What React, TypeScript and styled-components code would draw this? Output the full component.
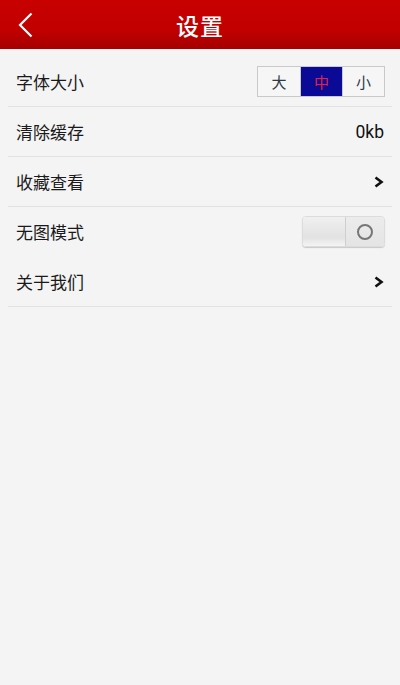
import React, { useState } from "react";
import styled, { createGlobalStyle } from "styled-components";

const GlobalStyle = createGlobalStyle`
  html, body {
    margin: 0;
    padding: 0;
    background: #f4f4f4;
  }
  body {
    font-family: "Noto Sans CJK SC", "Noto Sans", sans-serif;
  }
`;

const Page = styled.div`
  width: 400px;
  min-height: 685px;
  background: #f4f4f4;
  display: flex;
  flex-direction: column;
`;

const Header = styled.header`
  height: 49px;
  background: linear-gradient(to bottom, #c80000 0%, #c20000 60%, #a40000 100%);
  display: grid;
  grid-template-columns: 50px 1fr 50px;
  align-items: center;
`;

const BackButton = styled.button`
  border: 0;
  background: none;
  padding: 0 0 0 17px;
  height: 49px;
  display: flex;
  align-items: center;
  cursor: pointer;
`;

const Title = styled.h1`
  margin: 0;
  text-align: center;
  color: #fff;
  font-size: 23px;
  font-weight: 500;
  letter-spacing: 1px;
`;

const List = styled.div`
  padding: 8px 8px 0;
`;

const Row = styled.div<{ $divider?: boolean }>`
  height: 49px;
  display: flex;
  align-items: center;
  justify-content: space-between;
  padding: 0 8px;
  border-bottom: 1px solid ${({ $divider = true }) => ($divider ? "#e2e2e2" : "transparent")};
`;

const Label = styled.span`
  font-size: 17px;
  color: #1a1a1a;
`;

const Value = styled.span`
  font-family: "Roboto", "Noto Sans", sans-serif;
  font-size: 17.5px;
  color: #111;
`;

const Segmented = styled.div`
  display: flex;
  border: 1px solid #c9c9c9;
  height: 29px;
  margin-right: -1px;
`;

const Segment = styled.button<{ $active?: boolean }>`
  width: 42px;
  border: 0;
  border-left: 1px solid #c9c9c9;
  padding: 0;
  font-family: "Noto Sans CJK SC", sans-serif;
  font-size: 15px;
  background: ${({ $active }) => ($active ? "#0a0a96" : "#f6f6f6")};
  color: ${({ $active }) => ($active ? "#e8203c" : "#2e3a4a")};
  cursor: pointer;
  &:first-child {
    border-left: 0;
  }
`;

const Toggle = styled.div`
  display: flex;
  width: 83px;
  height: 31px;
  border-radius: 4px;
  overflow: hidden;
  margin-right: -1px;
  box-shadow: 0 1px 1px rgba(0, 0, 0, 0.18);
  border: 1px solid #dcdcdc;
  box-sizing: border-box;
`;

const ToggleTrack = styled.div`
  flex: 1;
  background: linear-gradient(to bottom, #f0f0f0 0%, #e2e2e2 70%, #f4f4f4 100%);
`;

const ToggleKnob = styled.div`
  width: 38px;
  border-left: 1px solid #cfcfcf;
  background: linear-gradient(to bottom, #ececec, #e4e4e4);
  display: flex;
  align-items: center;
  justify-content: center;
`;

const KnobRing = styled.span`
  width: 12px;
  height: 12px;
  border-radius: 50%;
  border: 2px solid #767676;
`;

const Chevron = () => (
  <svg width="10" height="12" viewBox="0 0 10 12">
    <path d="M1.5 1.5 L7.5 6 L1.5 10.5" fill="none" stroke="#111" strokeWidth="2.6" strokeLinejoin="miter" />
  </svg>
);

const sizes = ["大", "中", "小"];

export default function App() {
  const [size, setSize] = useState("中");
  return (
    <Page>
      <GlobalStyle />
      <Header>
        <BackButton aria-label="返回">
          <svg width="17" height="26" viewBox="0 0 17 26">
            <path d="M14.5 1.5 L3 13 L14.5 24.5" fill="none" stroke="#fff" strokeWidth="2.2" />
          </svg>
        </BackButton>
        <Title>设置</Title>
        <span />
      </Header>
      <List>
        <Row>
          <Label>字体大小</Label>
          <Segmented>
            {sizes.map((s) => (
              <Segment key={s} $active={s === size} onClick={() => setSize(s)}>
                {s}
              </Segment>
            ))}
          </Segmented>
        </Row>
        <Row>
          <Label>清除缓存</Label>
          <Value>0kb</Value>
        </Row>
        <Row>
          <Label>收藏查看</Label>
          <Chevron />
        </Row>
        <Row $divider={false}>
          <Label>无图模式</Label>
          <Toggle>
            <ToggleTrack />
            <ToggleKnob>
              <KnobRing />
            </ToggleKnob>
          </Toggle>
        </Row>
        <Row>
          <Label>关于我们</Label>
          <Chevron />
        </Row>
      </List>
    </Page>
  );
}
